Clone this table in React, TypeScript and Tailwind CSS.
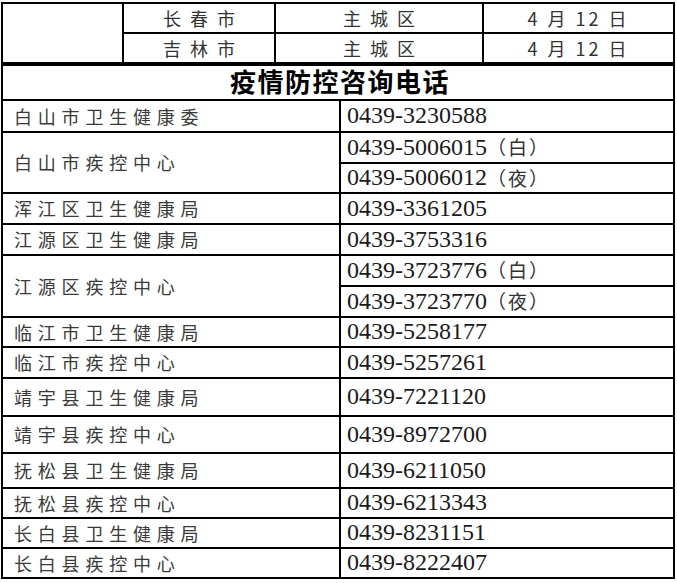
const cjk = "font-['Noto_Sans_CJK_SC',sans-serif]";
const serif = "font-['Liberation_Serif',serif]";

type Row = { name: string; phones: string[]; h: string; subH?: string };

const rows: Row[] = [
  { name: '白山市卫生健康委', phones: ['0439-3230588'], h: 'h-[32px]' },
  { name: '白山市疾控中心', phones: ['0439-5006015|白', '0439-5006012|夜'], h: 'h-[61px]', subH: 'h-[31px]' },
  { name: '浑江区卫生健康局', phones: ['0439-3361205'], h: 'h-[31px]' },
  { name: '江源区卫生健康局', phones: ['0439-3753316'], h: 'h-[31px]' },
  { name: '江源区疾控中心', phones: ['0439-3723776|白', '0439-3723770|夜'], h: 'h-[62px]', subH: 'h-[31px]' },
  { name: '临江市卫生健康局', phones: ['0439-5258177'], h: 'h-[30px]' },
  { name: '临江市疾控中心', phones: ['0439-5257261'], h: 'h-[31px]' },
  { name: '靖宇县卫生健康局', phones: ['0439-7221120'], h: 'h-[38px]' },
  { name: '靖宇县疾控中心', phones: ['0439-8972700'], h: 'h-[37px]' },
  { name: '抚松县卫生健康局', phones: ['0439-6211050'], h: 'h-[35px]' },
  { name: '抚松县疾控中心', phones: ['0439-6213343'], h: 'h-[30px]' },
  { name: '长白县卫生健康局', phones: ['0439-8231151'], h: 'h-[30px]' },
  { name: '长白县疾控中心', phones: ['0439-8222407'], h: 'h-[30px]' },
];

function Phone({ value }: { value: string }) {
  const [num, tag] = value.split('|');
  return (
    <span className="flex items-center pb-[2px]">
      <span className={`${serif} text-[24px] leading-none text-[#1a1a1a]`}>{num}</span>
      {tag && (
        <span className={`${cjk} text-[19px] leading-none text-[#333] tracking-[2px]`}>（{tag}）</span>
      )}
    </span>
  );
}

function TopRow({ city, last }: { city: string; last?: boolean }) {
  return (
    <div className={`flex ${last ? 'h-[28px]' : 'h-[30px] border-b-2 border-black'}`}>
      <div className={`w-[152px] border-r-2 border-black flex items-center justify-center pl-[9px] ${cjk} text-[18px] tracking-[9px] text-[#333]`}>
        {city}
      </div>
      <div className={`w-[208px] border-r-2 border-black flex items-center justify-center pl-[9px] ${cjk} text-[18px] tracking-[9px] text-[#333]`}>
        主城区
      </div>
      <div className={`flex-1 flex items-center justify-center ${cjk} text-[18px] tracking-[3px] text-[#333]`}>
        4 月 12 日
      </div>
    </div>
  );
}

export default function App() {
  return (
    <div className="min-h-[583px] bg-white pt-[2px] pl-[1px]">
      <div className="w-[674px] border-2 border-b-0 border-black">
        <div className="flex border-b-4 border-black">
          <div className="w-[121px] border-r-2 border-black" />
          <div className="flex-1 flex flex-col">
            <TopRow city="长春市" />
            <TopRow city="吉林市" last />
          </div>
        </div>

        <div className={`h-[35px] border-b-2 border-black flex items-center justify-center pb-[5px] pl-[4px] ${cjk} font-bold text-[26px] tracking-[1.5px] text-black`}>
          疫情防控咨询电话
        </div>

        {rows.map((r) => (
          <div key={r.name} className={`flex ${r.h} border-b-2 border-black`}>
            <div className={`w-[338px] border-r-2 border-black flex items-center pl-[11px] ${cjk} text-[18px] tracking-[5.8px] text-[#3a3a3a]`}>
              {r.name}
            </div>
            <div className="flex-1 flex flex-col">
              {r.phones.length === 1 ? (
                <div className="flex-1 flex items-center pl-[6px]">
                  <Phone value={r.phones[0]} />
                </div>
              ) : (
                <>
                  <div className={`${r.subH} border-b-2 border-black flex items-center pl-[6px]`}>
                    <Phone value={r.phones[0]} />
                  </div>
                  <div className="flex-1 flex items-center pl-[6px]">
                    <Phone value={r.phones[1]} />
                  </div>
                </>
              )}
            </div>
          </div>
        ))}
      </div>
    </div>
  );
}
